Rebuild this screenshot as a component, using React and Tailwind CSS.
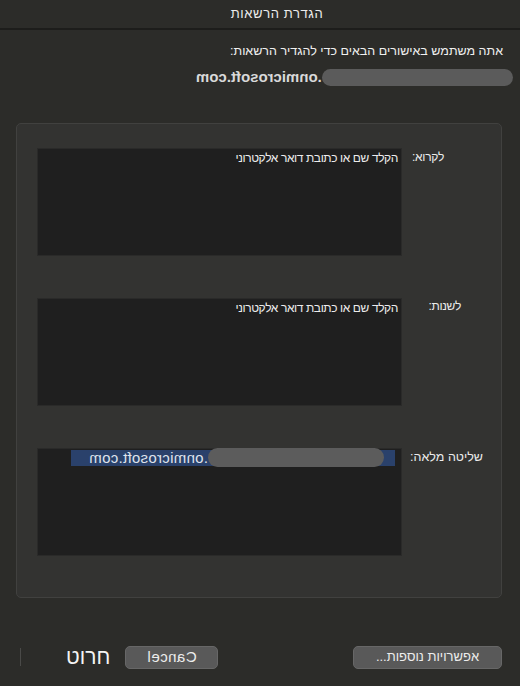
import React from "react";

function Box({ children }) {
  return (
    <div className="relative w-[365px] h-[108px] bg-[#1f1f1f] border border-[#2a2a29]">
      {children}
    </div>
  );
}

function Placeholder() {
  return (
    <div className="pr-[3px] pt-[1px] text-[12px] tracking-[-0.4px] leading-[17px] text-[#ececec]">
      הקלד שם או כתובת דואר אלקטרוני
    </div>
  );
}

export default function App() {
  return (
    <div
      dir="rtl"
      className="w-[520px] h-[686px] bg-[#2c2c29] flex flex-col text-[#e6e6e6]"
      style={{ fontFamily: '"Liberation Sans", "DejaVu Sans", sans-serif' }}
    >
      <div className="h-[30px] flex items-center justify-center border-b-2 border-[#1d1d1b] text-[13px] tracking-[0.6px] text-[#ededed]">
        <span className="translate-x-[17px]">הגדרת הרשאות</span>
      </div>

      <div className="pr-[17px] pt-[13px] text-[12.5px] leading-[17px] text-[#f0f0f0]">
        אתה משתמש באישורים הבאים כדי להגדיר הרשאות:
      </div>

      <div className="flex items-center pr-[7px] mt-[8px] h-[18px]">
        <div className="w-[191px] h-[17px] rounded-full bg-[#5b5b5b]" />
        <div className="-scale-x-100 text-[15px] font-bold text-[#d9d9d9]" dir="ltr">
          .onmicrosoft.com
        </div>
      </div>

      <div className="ml-[16px] mr-[18px] mt-[37px] h-[475px] rounded-[5px] border border-[#41413f] bg-[#333331] flex flex-col gap-[42px] pt-[24px] pl-[20px]">
        <div className="flex">
          <div className="w-[99px] pt-[1px] pr-[57px] text-[12px] tracking-[-0.3px] leading-[17px] text-[#ececec]">לקרוא:</div>
          <Box>
            <Placeholder />
          </Box>
        </div>
        <div className="flex">
          <div className="w-[99px] pr-[40px] text-[12px] tracking-[-0.3px] leading-[17px] text-[#ececec]">לשנות:</div>
          <Box>
            <Placeholder />
          </Box>
        </div>
        <div className="flex">
          <div className="w-[99px] pt-[1px] pr-[18px] text-[12.5px] leading-[17px] text-[#ececec]">שליטה מלאה:</div>
          <Box>
            <div className="mt-[1px] mr-[6px] ml-[33px] h-[16px] bg-[#2a416b] flex items-center">
              <div className="mr-[11px] w-[176px] h-[19px] -mt-[2px] rounded-full bg-[#5c5c5c]" />
              <div className="-scale-x-100 text-[15px] tracking-[0.3px] text-[#dfe3ec]" dir="ltr">
                .onmicrosoft.com
              </div>
            </div>
          </Box>
        </div>
      </div>

      <div className="flex items-center justify-between mt-[47px] pr-[18px] pl-[20px]">
        <button className="w-[149px] h-[23px] rounded-[5px] bg-[#595959] border border-[#676767] text-[13px] text-[#ececec] flex items-center justify-center">
          אפשרויות נוספות...
        </button>
        <div className="flex items-center">
          <button className="w-[93px] h-[23px] rounded-[5px] bg-[#595959] border border-[#676767] text-[15px] tracking-[0.5px] text-[#ececec] flex items-center justify-center">
            <span className="-scale-x-100" dir="ltr">Cancel</span>
          </button>
          <div className="mr-[15px] text-[21px] leading-[24px] text-[#f4f4f4]">חרוט</div>
          <div className="mr-[45px] w-px h-[18px] bg-[#4a4a48]" />
        </div>
      </div>
    </div>
  );
}
